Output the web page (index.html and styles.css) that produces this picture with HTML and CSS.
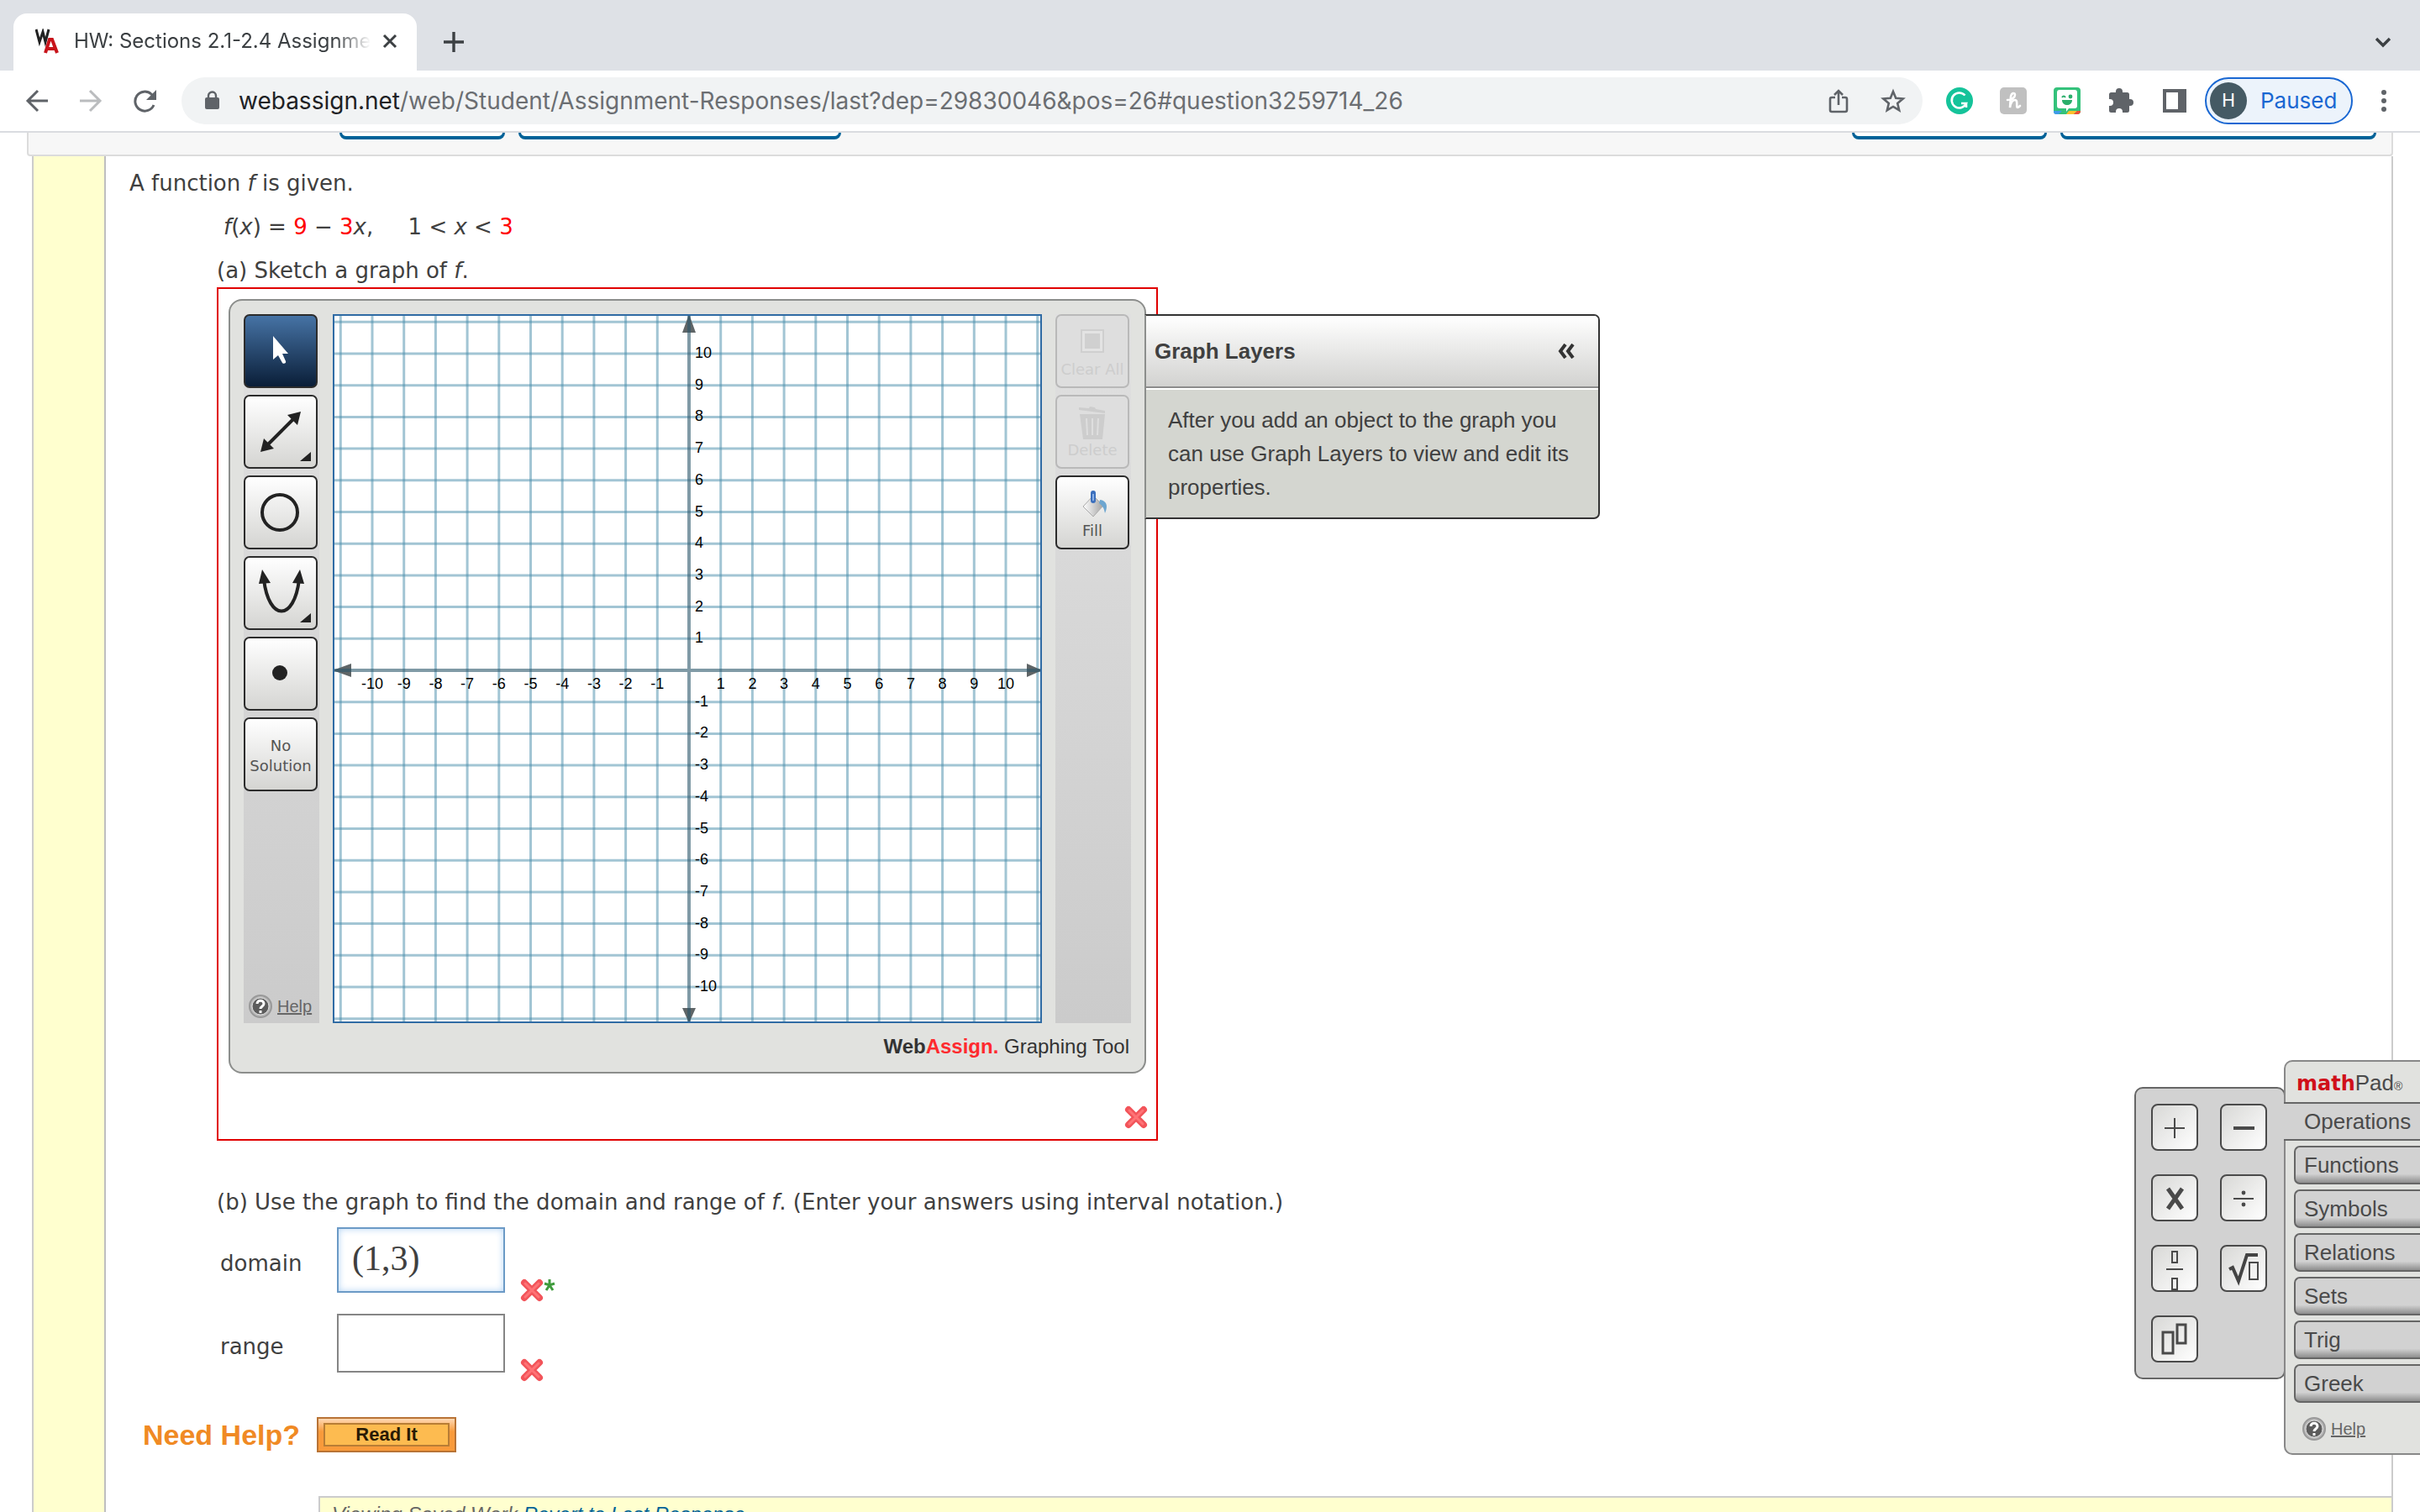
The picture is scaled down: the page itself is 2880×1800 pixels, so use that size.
FILE: index.html
```
<!DOCTYPE html>
<html lang="en">

<head>
    <meta charset="UTF-8">
    <meta name="viewport" content="width=device-width, initial-scale=1.0">
    <title>HW: Sections 2.1-2.4 Assignment</title>
    <link rel="stylesheet" href="styles.css">
</head>

<body>
    <!-- browser -->
    <header class="browser">
        <div class="tabs">
            <div class="tab">
                <svg class="favicon" width="30" height="30" viewBox="0 0 30 30" aria-hidden="true">
                    <path d="M1 1l4 15 4-12 3 12 4-15" fill="none" stroke="#222" stroke-width="3" />
                    <path d="M12 29l5-16h3l6 16M14 24h10" fill="none" stroke="#c8141b" stroke-width="4" />
                </svg>
                <span class="tab-title">HW: Sections 2.1-2.4 Assignment</span>
                <button class="plain" aria-label="Close tab">
                    <svg width="18" height="18" viewBox="0 0 18 18"><path d="M2 2l14 14M16 2L2 16" stroke="#3c4043" stroke-width="3" /></svg>
                </button>
            </div>
            <button class="plain new-tab" aria-label="New tab">
                <svg width="26" height="26" viewBox="0 0 26 26"><path d="M13 1v24M1 13h24" stroke="#3c4043" stroke-width="3.4" /></svg>
            </button>
            <button class="plain tab-search" aria-label="Search tabs">
                <svg width="20" height="14" viewBox="0 0 20 14"><path d="M2 2l8 8 8-8" fill="none" stroke="#3c4043" stroke-width="3.4" /></svg>
            </button>
        </div>
        <div class="toolbar">
            <div class="nav">
                <button class="plain" aria-label="Back">
                    <svg width="28" height="28" viewBox="0 0 28 28"><path d="M27 14H3M15 2L3 14l12 12" fill="none" stroke="#5f6368" stroke-width="3" /></svg>
                </button>
                <button class="plain" aria-label="Forward">
                    <svg width="28" height="28" viewBox="0 0 28 28"><path d="M1 14h24M13 2l12 12-12 12" fill="none" stroke="#babcbe" stroke-width="3" /></svg>
                </button>
                <button class="plain" aria-label="Reload">
                    <svg width="28" height="28" viewBox="0 0 28 28"><path d="M25 19A11.500 11.500 0 1 1 22 6l3 3" fill="none" stroke="#5f6368" stroke-width="3" /><path d="M28 1v12H16z" fill="#5f6368" /></svg>
                </button>
            </div>
            <div class="omnibox">
                <svg width="18" height="24" viewBox="0 0 18 24" aria-hidden="true"><rect x="0" y="8" width="17" height="14" rx="2" fill="#5f6368" /><path d="M4 9V6a4.500 4.500 0 0 1 9 0v3" fill="none" stroke="#5f6368" stroke-width="2.400" /></svg>
                <span class="url">webassign.net<span>/web/Student/Assignment-Responses/last?dep=29830046&amp;pos=26#question3259714_26</span></span>
                <button class="plain" aria-label="Share">
                    <svg width="24" height="30" viewBox="0 0 24 30"><path d="M8 11H4a2 2 0 0 0-2 2v13a2 2 0 0 0 2 2h16a2 2 0 0 0 2-2V13a2 2 0 0 0-2-2h-4M12 20V3M7 8l5-5 5 5" fill="none" stroke="#5f6368" stroke-width="2.600" /></svg>
                </button>
                <button class="plain" aria-label="Bookmark">
                    <svg width="30" height="30" viewBox="0 0 30 30"><path d="M15 4l3.200 7.800 8.500.7-6.500 5.500 2 8.200L15 21.900l-7.200 4.300 2-8.200-6.500-5.500 8.500-.7z" fill="none" stroke="#5f6368" stroke-width="2.600" /></svg>
                </button>
            </div>
            <div class="extensions">
                <svg width="32" height="32" viewBox="0 0 32 32"><circle cx="16" cy="16" r="16" fill="#15c39a" /><path d="M22.500 9.500A9 9 0 1 0 24 19h-6M24 18v6" fill="none" stroke="#fff" stroke-width="2.600" /></svg>
                <svg width="32" height="32" viewBox="0 0 32 32"><rect width="32" height="32" rx="5" fill="#c0c0c0" /><path d="M9 15c5 0 9-3 9-6s-4-3-5 2l-1 13c1-6 3-9 6-9 4 0 1 9 3 9 1 0 2-1 3-2" fill="none" stroke="#fff" stroke-width="2.600" stroke-linecap="round" /></svg>
                <svg width="32" height="32" viewBox="0 0 32 32"><rect width="32" height="32" rx="4" fill="#34c27b" /><path d="M0 28h10l-4 4H3a3 3 0 0 1-3-3z" fill="#3f9be8" /><path d="M18 28h10l-4 4H15z" fill="#fbc02d" /><path d="M28 28h4a4 4 0 0 1-4 4h-4z" fill="#ee4b35" /><path d="M7 3h18a3 3 0 0 1 3 3v16a3 3 0 0 1-3 3h-7l-3 4v-4H7a3 3 0 0 1-3-3V6a3 3 0 0 1 3-3z" fill="#fff" /><path d="M10 15h12c0 8-12 8-12 0z" fill="#2aae6b" /><circle cx="20" cy="11" r="2.400" fill="#2aae6b" /><path d="M10 12q2-3 4 0" fill="none" stroke="#2aae6b" stroke-width="2" /></svg>
                <svg width="32" height="32" viewBox="0 0 32 32"><path d="M2 8.500A2.500 2.500 0 0 1 4.500 6H10V5a4 4 0 0 1 8 0v1h5.500A2.500 2.500 0 0 1 26 8.500V14h1a4 4 0 0 1 0 8h-1v5.500a2.500 2.500 0 0 1-2.500 2.500H18v-1a4 4 0 0 0-8 0v1H4.500A2.500 2.500 0 0 1 2 27.500V22h1a4 4 0 0 0 0-8H2z" fill="#5f6368" /></svg>
                <svg width="32" height="32" viewBox="0 0 32 32"><path d="M2 2h28v28H2zM6 6v20h14V6z" fill="#5f6368" fill-rule="evenodd" /></svg>
            </div>
            <button class="profile"><span class="avatar">H</span>Paused</button>
            <button class="plain menu" aria-label="Menu">
                <svg width="6" height="28" viewBox="0 0 6 28"><circle cx="3" cy="4" r="3" fill="#5f6368" /><circle cx="3" cy="14" r="3" fill="#5f6368" /><circle cx="3" cy="24" r="3" fill="#5f6368" /></svg>
            </button>
        </div>
    </header>

    <main class="page">
        <!-- bottom edge of the question header -->
        <div class="question-head">
            <button class="head-btn notes" aria-label="My Notes"></button>
            <button class="head-btn teacher" aria-label="Ask Your Teacher"></button>
            <button class="head-btn practice" aria-label="Practice"></button>
            <button class="head-btn another" aria-label="Practice Another"></button>
        </div>

        <section class="question">
            <div class="gutter"></div>
            <div class="content">
                <p>A function <i>f</i> is given.</p>
                <div class="parts">
                    <p class="formula"><i>f</i>(<i>x</i>) = <b>9</b> − <b>3</b><i>x</i>, &nbsp;&nbsp;&nbsp;&nbsp;1 &lt; <i>x</i> &lt; <b>3</b></p>
                    <p>(a) Sketch a graph of <i>f</i>.</p>

                    <div class="answer-box">
                        <div class="graph-tool">
                            <div class="tool-row">
                                <div class="tools">
                                    <button class="tool active" aria-label="Select">
                                        <svg viewBox="0 0 84 84"><path d="M33 24v28l6-5 5 9c2 2 5 0 4-2l-4-9h7z" fill="#fff" /></svg>
                                    </button>
                                    <button class="tool" aria-label="Line">
                                        <svg viewBox="0 0 84 84"><path d="M24 60l38-38" stroke="#222" stroke-width="4" /><path d="M66 18l-4 16-12-12zM18 66l4-16 12 12zM78 66v11H65z" fill="#222" /></svg>
                                    </button>
                                    <button class="tool" aria-label="Circle">
                                        <svg viewBox="0 0 84 84"><circle cx="41" cy="42" r="21" fill="none" stroke="#222" stroke-width="4" /></svg>
                                    </button>
                                    <button class="tool" aria-label="Parabola">
                                        <svg viewBox="0 0 84 84"><path d="M22 26c6 50 36 50 42 0" fill="none" stroke="#222" stroke-width="4" /><path d="M20 14l10 16-14 1zM65 14l5 17-14-1zM78 66v11H65z" fill="#222" /></svg>
                                    </button>
                                    <button class="tool" aria-label="Point">
                                        <svg viewBox="0 0 84 84"><circle cx="41" cy="41" r="9" fill="#222" /></svg>
                                    </button>
                                    <button class="tool label">No<br>Solution</button>
                                    <a class="help" href="#">
                                        <svg width="28" height="28" viewBox="0 0 28 28"><circle cx="14" cy="14" r="13" fill="#bbb" stroke="#999" stroke-width="2" /><circle cx="14" cy="14" r="10" fill="#5c5c5c" stroke="#ddd" /><path d="M10 11c0-5 8-5 8 0 0 3-4 3-4 6M14 19v3" fill="none" stroke="#fff" stroke-width="3" /></svg>
                                        <span>Help</span>
                                    </a>
                                </div>

                                <svg class="graph" id="graph" viewBox="0 0 840 840" role="img" aria-label="Coordinate grid">
                                    <g id="grid" stroke="#468ba9" stroke-opacity=".5" stroke-width="3"></g>
                                    <g fill="#5f6567">
                                        <path d="M422-2l8 22h-16zM422 842l8-18h-16zM-2 422l22-8v16zM842 422l-18-8v16z" />
                                    </g>
                                    <path d="M422 0v840M0 422h840" stroke="#2b566a" stroke-opacity=".6" stroke-width="4" />
                                    <g id="labels"></g>
                                </svg>

                                <div class="tools">
                                    <button class="tool label" disabled>
                                        <svg width="40" height="40" viewBox="0 0 40 40"><rect x="7" y="5" width="26" height="26" fill="#e3e3e3" stroke="#cfcfcf" stroke-width="2" /><rect x="11" y="9" width="18" height="18" fill="#d0d0d0" /></svg>
                                        Clear All
                                    </button>
                                    <button class="tool label" disabled>
                                        <svg width="40" height="40" viewBox="0 0 40 40"><path d="M4 1l12 1 1-2 6 1 1 2 11 2v3L4 4zM5 9h30l-3 30H9zM12 14l1 20h2l-1-20zM19 14v20h2V14zM26 14l-1 20h2l1-20z" fill="#cdcdcd" fill-rule="evenodd" /></svg>
                                        Delete
                                    </button>
                                    <button class="tool label">
                                        <svg width="40" height="40" viewBox="0 0 40 40"><defs><linearGradient id="can"><stop offset="0" stop-color="#fff" /><stop offset="1" stop-color="#a2a2a2" /></linearGradient></defs><path d="M21 10l12 12-12 13L9 23z" fill="url(#can)" stroke="#aaa" /><path d="M29 15c8 1 10 7 6 16-1-6-3-9-7-12z" fill="#6da6d0" /><path d="M21 7v9" stroke="#3b6fbd" stroke-width="6" stroke-linecap="round" /><path d="M21 8v8" stroke="#8ab0e6" stroke-width="2" /></svg>
                                        Fill
                                    </button>
                                </div>
                            </div>
                            <div class="tool-brand"><strong>Web<em>Assign.</em></strong> Graphing Tool</div>

                            <aside class="layers">
                                <div class="layers-head">
                                    <span>Graph Layers</span>
                                    <button class="plain" aria-label="Collapse">
                                        <svg width="20" height="18" viewBox="0 0 20 18"><path d="M9 1L3 9l6 8M18 1l-6 8 6 8" fill="none" stroke="#333" stroke-width="4" /></svg>
                                    </button>
                                </div>
                                <p>After you add an object to the graph you can use Graph Layers to view and edit its properties.</p>
                            </aside>
                        </div>
                        <svg class="mark" viewBox="0 0 28 28" role="img" aria-label="Incorrect"><path d="M5 5l18 18M23 5L5 23" stroke="#f2545a" stroke-width="8" stroke-linecap="round" /><path d="M6 6l16 16M22 6L6 22" stroke="#ff7376" stroke-width="3" stroke-linecap="round" /></svg>
                    </div>

                    <p class="part-b">(b) Use the graph to find the domain and range of <i>f</i>. (Enter your answers using interval notation.)</p>
                    <div class="answers">
                        <div class="answer">
                            <label for="domain">domain</label>
                            <input class="focused" id="domain" type="text" value="(1,3)">
                            <svg class="mark" viewBox="0 0 28 28" role="img" aria-label="Incorrect"><path d="M5 5l18 18M23 5L5 23" stroke="#f2545a" stroke-width="8" stroke-linecap="round" /><path d="M6 6l16 16M22 6L6 22" stroke="#ff7376" stroke-width="3" stroke-linecap="round" /></svg>
                            <svg class="star" viewBox="0 0 14 28" aria-hidden="true"><path d="M7 1v7M1 6l6 2 6-2M7 8l-4 6M7 8l4 6" fill="none" stroke="#3f9b3c" stroke-width="3" /></svg>
                        </div>
                        <div class="answer">
                            <label for="range">range</label>
                            <input id="range" type="text">
                            <svg class="mark" viewBox="0 0 28 28" role="img" aria-label="Incorrect"><path d="M5 5l18 18M23 5L5 23" stroke="#f2545a" stroke-width="8" stroke-linecap="round" /><path d="M6 6l16 16M22 6L6 22" stroke="#ff7376" stroke-width="3" stroke-linecap="round" /></svg>
                        </div>
                    </div>
                </div>

                <div class="need-help">
                    <span>Need Help?</span>
                    <button class="read-it"><span>Read It</span></button>
                </div>
                <div class="saved">Viewing Saved Work <a href="#">Revert to Last Response</a></div>
            </div>
        </section>
    </main>

    <!-- mathPad palette -->
    <aside class="mathpad">
        <div class="keys">
            <button aria-label="Plus"><svg viewBox="0 0 52 52"><path d="M26 15v24M14 27h24" stroke="#4a4a4a" stroke-width="2" /></svg></button>
            <button aria-label="Minus"><svg viewBox="0 0 52 52"><path d="M14 27h25" stroke="#4a4a4a" stroke-width="4" /></svg></button>
            <button aria-label="Times"><svg viewBox="0 0 52 52"><path d="M18 15l17 24M35 15L18 39" stroke="#4a4a4a" stroke-width="5" /></svg></button>
            <button aria-label="Divide"><svg viewBox="0 0 52 52"><path d="M14 27h24" stroke="#4a4a4a" stroke-width="2" /><circle cx="26" cy="20" r="2.400" fill="#4a4a4a" /><circle cx="26" cy="34" r="2.400" fill="#4a4a4a" /></svg></button>
            <button aria-label="Fraction"><svg viewBox="0 0 52 52"><path d="M16 27h20" stroke="#4a4a4a" stroke-width="2" /><path d="M23 6h6v13h-6zM23 38h6v13h-6z" fill="none" stroke="#4a4a4a" stroke-width="2" /></svg></button>
            <button aria-label="Square root"><svg viewBox="0 0 52 52"><path d="M9 27l4-2 7 16L30 10h13" fill="none" stroke="#444" stroke-width="4" /><path d="M33 19h10v20H33z" fill="none" stroke="#4a4a4a" stroke-width="2" /></svg></button>
            <button aria-label="Exponent"><svg viewBox="0 0 52 52"><path d="M12 18h12v25H12zM29 9h10v22H29z" fill="none" stroke="#4a4a4a" stroke-width="3" /></svg></button>
        </div>
        <div class="groups">
            <div class="logo"><strong>math</strong>Pad<small>®</small></div>
            <button class="group open">Operations</button>
            <button class="group">Functions</button>
            <button class="group">Symbols</button>
            <button class="group">Relations</button>
            <button class="group">Sets</button>
            <button class="group">Trig</button>
            <button class="group">Greek</button>
            <a class="help" href="#">
                <svg width="28" height="28" viewBox="0 0 28 28"><circle cx="14" cy="14" r="13" fill="#bbb" stroke="#999" stroke-width="2" /><circle cx="14" cy="14" r="10" fill="#5c5c5c" stroke="#ddd" /><path d="M10 11c0-5 8-5 8 0 0 3-4 3-4 6M14 19v3" fill="none" stroke="#fff" stroke-width="3" /></svg>
                <span>Help</span>
            </a>
        </div>
    </aside>
    <script src="script.js"></script>
</body>

</html>
```
FILE: styles.css
```
* {
    margin: 0;
    padding: 0;
    box-sizing: border-box;
}

body {
    height: 100vh;
    overflow: hidden;
    background: #fff;
    color: #404040;
    font: 26px/32px "DejaVu Sans", sans-serif;
}

button {
    font: inherit;
    color: inherit;
}

svg {
    display: block;
    flex: none;
}

.plain {
    border: 0;
    background: none;
}

/* browser */
.browser {
    font-family: Inter, Roboto, sans-serif;
    border-bottom: 2px solid #dadce0;
}

.tabs {
    display: flex;
    align-items: center;
    height: 84px;
    padding: 0 34px 0 16px;
    background: #dee1e6;
}

.tab {
    display: flex;
    align-items: center;
    align-self: flex-end;
    width: 480px;
    height: 68px;
    padding: 0 23px 2px 26px;
    border-radius: 16px 16px 0 0;
    background: #fff;
    font-size: 24px;
    color: #3c4043;
}

.tab-title {
    flex: 1;
    margin: 0 14px 0 16px;
    overflow: hidden;
    white-space: nowrap;
    -webkit-mask-image: linear-gradient(to right, #000 88%, transparent);
    mask-image: linear-gradient(to right, #000 88%, transparent);
}

.new-tab {
    margin: 16px 0 0 31px;
    height: 34px;
}

.tab-search {
    margin: 18px 0 0 auto;
}

.toolbar {
    display: flex;
    align-items: center;
    height: 72px;
    padding: 0 40px 0 30px;
}

.nav {
    display: flex;
    gap: 36px;
    margin-right: 30px;
}

.omnibox {
    display: flex;
    flex: 1;
    align-items: center;
    gap: 38px;
    height: 56px;
    padding: 0 20px 0 28px;
    border-radius: 28px;
    background: #f1f3f4;
    font-size: 28px;
    color: #202124;
}

.url {
    flex: 1;
    margin-left: -16px;
    white-space: nowrap;
}

.url span {
    color: #6b6e72;
}

.extensions {
    display: flex;
    gap: 32px;
    margin: 0 20px 0 28px;
}

.profile {
    display: flex;
    align-items: center;
    gap: 16px;
    width: 176px;
    height: 56px;
    padding-left: 4px;
    border: 2px solid #1967d2;
    border-radius: 28px;
    background: #ecf3fb;
    font-size: 26px;
    color: #1967d2;
}

.avatar {
    width: 44px;
    border-radius: 22px;
    background: #455a64;
    font: 22px/44px Roboto, sans-serif;
    text-align: center;
    color: #fff;
}

.menu {
    margin-left: 34px;
}

/* question */
.page {
    margin: 0 32px;
}

.question-head {
    display: flex;
    align-items: flex-start;
    gap: 16px;
    height: 28px;
    padding: 0 18px 0 370px;
    border: 2px solid #dcdcdc;
    border-top: 0;
    border-radius: 0 0 4px 4px;
    background: #f7f7f7;
}

.head-btn {
    height: 8px;
    border: 3px solid #006298;
    border-top: 0;
    border-bottom-width: 4px;
    border-radius: 0 0 8px 8px;
    background: #fff;
}

.notes {
    width: 197px;
}

.teacher {
    width: 384px;
}

.practice {
    width: 232px;
    margin-left: auto;
}

.another {
    width: 376px;
}

.question {
    display: flex;
    margin-left: 6px;
    border: 2px solid #ccc;
    border-width: 0 2px;
}

.gutter {
    width: 86px;
    border-right: 2px solid #bfbfbf;
    background: #ffffcf;
}

.content {
    flex: 1;
    padding: 16px 0 0 28px;
}

.parts {
    margin-left: 104px;
}

.parts p {
    margin-top: 20px;
}

.parts .formula {
    padding-left: 8px;
}

.formula b {
    font-weight: normal;
    color: #f00;
}

.answer-box {
    width: 1120px;
    margin-top: 4px;
    padding: 12px;
    border: 2px solid #e00000;
}

.answer-box > .mark {
    margin: 38px -2px 0 auto;
}

.mark {
    width: 28px;
    height: 28px;
}

/* graphing tool */
.graph-tool {
    position: relative;
    padding: 16px 16px 0;
    border: 2px solid #8c8e8c;
    border-radius: 16px;
    background: #e1e2df;
    font-family: "Liberation Sans", sans-serif;
}

.tool-row {
    display: flex;
    justify-content: space-between;
}

.tools {
    display: flex;
    flex-direction: column;
    gap: 8px;
    width: 90px;
    background: linear-gradient(#e0e0e0, #cbcbcb);
}

.tool {
    width: 88px;
    height: 88px;
    border: 2px solid #2c2c2c;
    border-radius: 7px;
    background: linear-gradient(#fff, #d5d5d2);
}

.tool.active {
    background: linear-gradient(#4673a5, #0a1e38);
}

.tool.label {
    display: flex;
    flex-direction: column;
    align-items: center;
    justify-content: center;
    padding-top: 4px;
    font: 18px/24px "DejaVu Sans", sans-serif;
    white-space: nowrap;
    color: #555;
}

.tool:disabled {
    border-color: #b9b9b9;
    background: #dedede;
    color: #cdcdcd;
}

.tools .help {
    margin: auto 0 6px 6px;
}

.help {
    display: flex;
    align-items: center;
    gap: 6px;
    font: 20px/28px "Liberation Sans", sans-serif;
    color: #666;
}

.graph {
    width: 844px;
    height: 844px;
    border: 2px solid #2f6ba4;
    background: #fff;
}

.graph text {
    font: 18px "Liberation Sans", sans-serif;
    fill: #000;
}

.x-label {
    text-anchor: middle;
}

.tool-brand {
    padding: 12px 2px 14px;
    font-size: 24px;
    text-align: right;
    color: #333;
}

.tool-brand em {
    font-style: normal;
    color: #ff2a2e;
}

.layers {
    position: absolute;
    top: 16px;
    left: 100%;
    width: 542px;
    border: 2px solid #333;
    border-left-color: #8c8e8c;
    border-radius: 0 7px 7px 0;
    background: #d4d6d0;
}

.layers-head {
    display: flex;
    align-items: center;
    justify-content: space-between;
    height: 86px;
    padding: 0 28px 0 10px;
    border-bottom: 2px solid #8c8c8c;
    border-radius: 0 5px 0 0;
    background: linear-gradient(#fff, #d2d2d0);
    font-weight: bold;
}

.parts .layers p {
    margin: 0;
    padding: 16px 28px 16px 26px;
    border-top: 2px solid #fff;
    line-height: 40px;
}

/* answers */
.parts .part-b {
    margin-top: 57px;
}

.answers {
    display: grid;
    gap: 14px;
    margin: 14px 0 42px 4px;
}

.answer {
    display: flex;
    align-items: center;
}

.answer label {
    width: 139px;
    padding-bottom: 3px;
}

.answer input {
    width: 200px;
    height: 70px;
    margin: 0 18px 11px 0;
    padding: 0 16px 4px;
    border: 2px solid #858585;
    background: #fff;
    font: 42px "Liberation Serif", serif;
    color: #404040;
}

.answer .focused {
    height: 78px;
    border-color: #6b9ac6;
    box-shadow: inset 0 0 8px #b5d5f5;
}

.answer .mark,
.star {
    align-self: flex-end;
}

.star {
    width: 14px;
    height: 28px;
}

.need-help {
    display: flex;
    align-items: center;
    gap: 20px;
    margin-left: 16px;
    font: bold 34px/42px "Liberation Sans", sans-serif;
    color: #f08a24;
}

.read-it {
    width: 166px;
    height: 42px;
    padding: 5px 6px;
    border: 2px solid #b87335;
    background: linear-gradient(#ffd9b5, #f99b3b 40%);
    font-size: 22px;
    line-height: 24px;
    color: #2a1a05;
}

.read-it span {
    display: block;
    border: 2px solid #b87d35;
    background: #fdbb50;
}

.saved {
    height: 60px;
    margin: 52px 0 0 225px;
    padding: 6px 14px;
    border: 2px solid #ccc;
    border-right: 0;
    background: #ffffcf;
    font: italic 24px/28px "Liberation Sans", sans-serif;
    color: #666;
}

.saved a {
    color: #006298;
    text-decoration: none;
}

/* mathpad */
.mathpad {
    position: fixed;
    right: 0;
    bottom: 68px;
    display: flex;
    align-items: flex-start;
    font-family: "Liberation Sans", sans-serif;
    color: #4a4a4a;
}

.keys {
    display: grid;
    grid-template-columns: 56px 56px;
    gap: 28px 26px;
    height: 348px;
    margin: 32px -2px 0 0;
    padding: 18px 20px 18px 18px;
    border: 2px solid #666;
    border-radius: 10px;
    background: #d2d2d2;
}

.keys button {
    height: 56px;
    border: 2px solid #4a4a4a;
    border-radius: 8px;
    background: linear-gradient(135deg, #d8d8d6, #fff);
}

.groups {
    width: 162px;
    height: 470px;
    border: 2px solid #888;
    border-right: 0;
    border-radius: 10px 0 0 10px;
    background: #e1e2df;
}

.logo {
    height: 48px;
    padding: 9px 0 0 13px;
    white-space: nowrap;
}

.logo strong {
    font: bold 24px/32px "DejaVu Sans", sans-serif;
    color: #d0101a;
}

.logo small {
    font-size: 14px;
}

.group {
    display: block;
    width: 150px;
    height: 46px;
    margin: 6px 0 0 10px;
    padding: 0 0 1px 10px;
    border: 2px solid #666;
    border-right: 0;
    border-radius: 7px 0 0 7px;
    background: linear-gradient(#d2d2d2 75%, #8e8e8e);
    text-align: left;
}

.group.open {
    width: 162px;
    margin: 0 0 0 -2px;
    padding: 0 0 0 24px;
    border-left: 0;
    border-radius: 0;
    background: #d2d2d2;
}

.groups .help {
    margin: 17px 0 0 20px;
}
```
FILE: script.js
```
var NS = "http://www.w3.org/2000/svg";
var grid = document.getElementById("grid");
var labels = document.getElementById("labels");
var center = 422;
var step = 37.7;

function addLine(x1, y1, x2, y2) {
    var line = document.createElementNS(NS, "line");
    line.setAttribute("x1", x1);
    line.setAttribute("y1", y1);
    line.setAttribute("x2", x2);
    line.setAttribute("y2", y2);
    grid.appendChild(line);
}

function addLabel(x, y, n, cls) {
    var text = document.createElementNS(NS, "text");
    text.setAttribute("x", x);
    text.setAttribute("y", y);
    text.setAttribute("class", cls);
    text.textContent = n;
    labels.appendChild(text);
}

for (var i = -11; i <= 11; i++) {
    //the axes are drawn on their own
    if (i === 0) {
        continue;
    }
    var x = center + i * step;
    var y = center - i * step;
    addLine(x, 0, x, 840);
    addLine(0, y, 840, y);
    if (Math.abs(i) < 11) {
        addLabel(x, center + 22, i, "x-label");
        addLabel(center + 7, y + 5, i, "y-label");
    }
}
```
